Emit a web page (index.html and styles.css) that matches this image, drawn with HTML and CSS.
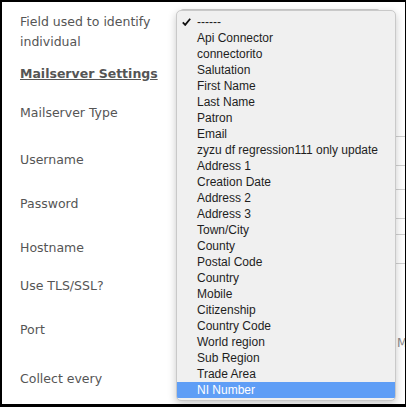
FILE: index.html
```html
<!DOCTYPE html>
<html>
<head>
<meta charset="utf-8">
<link rel="stylesheet" href="styles.css">
</head>
<body>
<div class="frame">
  <form class="form">
    <div class="row row-first">
      <label class="label">Field used to identify individual</label>
      <div class="field"><div class="select"></div></div>
    </div>
    <div class="row row-heading">
      <h3 class="heading">Mailserver Settings</h3>
    </div>
    <div class="row row-type">
      <label class="label">Mailserver Type</label>
      <div class="field"><div class="select"></div></div>
    </div>
    <div class="row row-std">
      <label class="label">Username</label>
      <div class="field"><div class="input input-user"></div></div>
    </div>
    <div class="row row-std">
      <label class="label">Password</label>
      <div class="field"><div class="input input-pass"></div></div>
    </div>
    <div class="row row-short">
      <label class="label">Hostname</label>
      <div class="field"><div class="input input-host"></div></div>
    </div>
    <div class="row row-std">
      <label class="label">Use TLS/SSL?</label>
      <div class="field"><div class="checkbox"></div></div>
    </div>
    <div class="row row-port">
      <label class="label">Port</label>
      <div class="field">
        <div class="input input-small"></div>
        <div class="help">Mailserver port</div>
      </div>
    </div>
    <div class="row row-std">
      <label class="label">Collect every</label>
      <div class="field"><div class="input input-small"></div></div>
    </div>
  </form>

  <ul class="popup">
    <li class="opt checked"><svg class="check" width="9" height="8" viewBox="0 0 9 8"><path d="M0.8 4.4 L3.2 6.9 L8.2 0.8" fill="none" stroke="#111" stroke-width="1.8"/></svg>------</li>
    <li class="opt">Api Connector</li>
    <li class="opt">connectorito</li>
    <li class="opt">Salutation</li>
    <li class="opt">First Name</li>
    <li class="opt">Last Name</li>
    <li class="opt">Patron</li>
    <li class="opt">Email</li>
    <li class="opt">zyzu df regression111 only update</li>
    <li class="opt">Address 1</li>
    <li class="opt">Creation Date</li>
    <li class="opt">Address 2</li>
    <li class="opt">Address 3</li>
    <li class="opt">Town/City</li>
    <li class="opt">County</li>
    <li class="opt">Postal Code</li>
    <li class="opt">Country</li>
    <li class="opt">Mobile</li>
    <li class="opt">Citizenship</li>
    <li class="opt">Country Code</li>
    <li class="opt">World region</li>
    <li class="opt">Sub Region</li>
    <li class="opt">Trade Area</li>
    <li class="opt active">NI Number</li>
  </ul>
</div>
</body>
</html>
```

FILE: styles.css
```css
* { box-sizing: border-box; }

html, body {
  margin: 0;
  padding: 0;
  background: #fff;
}

.frame {
  position: relative;
  width: 406px;
  height: 407px;
  border-style: solid;
  border-color: #000;
  border-width: 2px 1px 3px 2px;
  overflow: hidden;
  background: #fff;
}

.form {
  padding: 10px 0 0 18px;
  font-family: "DejaVu Sans", Verdana, sans-serif;
  font-size: 12.5px;
  line-height: 20px;
  color: #555;
}

.row {
  display: grid;
  grid-template-columns: 160px 1fr;
  align-items: start;
}

.row-first { height: 52px; }
.row-heading { height: 39px; }
.row-type { height: 47px; }
.row-std { height: 44px; }
.row-short { height: 38px; }
.row-port { height: 49px; }

.label {
  display: block;
  width: 145px;
}

.heading {
  margin: 0;
  font-size: 12.5px;
  font-weight: bold;
  line-height: 20px;
  color: #555;
  text-decoration: underline;
  white-space: nowrap;
}

.field {
  position: relative;
}

.select {
  width: 200px;
  height: 26px;
  margin-top: -3px;
  border: 1px solid #ccc;
  border-radius: 3px;
  background: #fff;
}

.input {
  width: 260px;
  height: 30px;
  border: 1px solid #d0d0d0;
  background: #fff;
}

.input-user { margin-top: -14px; }
.input-pass { margin-top: -5px; }
.input-host { margin-top: -4px; }
.input-small { width: 120px; margin-top: -5px; }

.checkbox {
  width: 13px;
  height: 13px;
  margin-top: 4px;
  border: 1px solid #aaa;
}

.help {
  position: absolute;
  left: 217px;
  top: 13px;
  font-size: 12px;
  color: #8a8a8a;
  white-space: nowrap;
}

.popup {
  position: absolute;
  left: 174px;
  top: 8px;
  width: 220px;
  margin: 0;
  padding: 3px 0 2px;
  list-style: none;
  background: #f0f0f0;
  border: 1px solid #c9c9c9;
  border-radius: 5px;
  box-shadow: 0 3px 9px rgba(0, 0, 0, 0.22);
  font-family: "Liberation Sans", Arial, sans-serif;
  font-size: 12px;
  color: #1e1e1e;
  overflow: hidden;
}

.opt {
  position: relative;
  height: 16px;
  line-height: 16px;
  padding-left: 20px;
  white-space: nowrap;
}

.check {
  position: absolute;
  left: 5px;
  top: 4px;
}

.opt.active {
  background: #5f9ef6;
  color: #fff;
}
```
